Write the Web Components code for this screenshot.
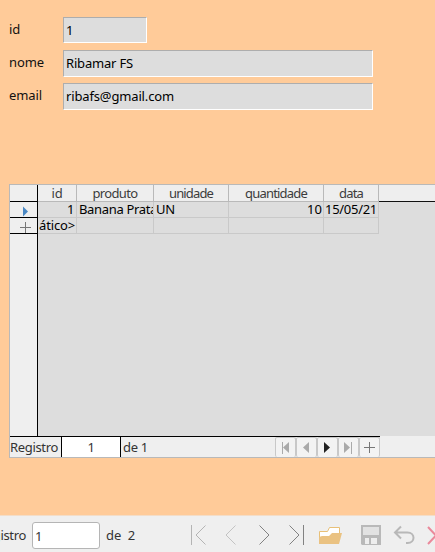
<!DOCTYPE html>
<html lang="pt"><head><meta charset="utf-8"><title>Cadastro</title>
<style>html,body{margin:0;height:100%;overflow:hidden}body{background:#ffcb99;font:13px/16px "Noto Sans","Open Sans",sans-serif;color:#111}</style></head>
<body><record-form></record-form>
<script>
const define=(name,css,html,ready)=>customElements.define(name,class extends HTMLElement{
  connectedCallback(){
    if(this.shadowRoot)return;
    const t=document.createElement('template');
    t.innerHTML='<style>*{box-sizing:border-box}'+css+'</style>'+html;
    this.attachShadow({mode:'open'}).append(t.content.cloneNode(true));
    if(ready)ready.call(this,this.shadowRoot);
  }
});

/* A text run whose tracking is adjusted to a given width. */
define('fit-text',':host{display:block;white-space:pre;flex:none}span{display:block;width:max-content}','<span><slot></slot></span>',function(root){
  const w=+this.getAttribute('w');
  const s=root.querySelector('span'), n=this.textContent.length;
  if(w){this.style.width=w+'px';s.style.letterSpacing=((w-s.getBoundingClientRect().width)/n)+'px';}
});

define('form-field',
 ':host{display:flex;height:var(--h,27px);align-items:flex-start}.label{width:54px;padding-top:4px}.box{width:var(--w,310px);height:100%;background:#ddd;border:1px solid;border-color:#adadad #fff #fff #adadad;padding:4px 0 0 2px;color:#000}',
 '<div class="label"><slot name="label"></slot></div><div class="box"><slot></slot></div>');

define('head-cell',
 ':host{display:flex;justify-content:center;background:#eee;border-right:1px solid #b9b9b9;border-bottom:1px solid #b9b9b9;color:#3c3c3c;overflow:hidden}',
 '<slot></slot>');
define('data-cell',
 ':host{display:flex;box-sizing:border-box;line-height:14px;background:#ddd;border-right:1px solid #c9c9c9;border-bottom:1px solid #c9c9c9;overflow:hidden;min-width:0;padding-left:2px;color:#000}:host([end]){justify-content:flex-end;padding:0 1px 0 0}',
 '<slot></slot>');
define('row-mark',
 ':host{display:block;background:#efefef;border-right:1px solid #000;border-bottom:1px solid #000}svg{display:block}',
 '<slot></slot>');
define('nav-button',
 ':host{display:block;box-sizing:border-box;width:21px;height:20px;background:#f3f3f3;border:1px solid #c8c8c8;border-bottom:0;border-radius:2px}svg{display:block}',
 '<svg width="19" height="19"></svg>',function(root){
  const s={first:'<path d="M6.5 4v12" stroke="#aaa"/><path d="M13 4v11L7 9.5z" fill="#aaa"/>',
   prev:'<path d="M12 4v11L6 9.5z" fill="#aaa"/>',
   next:'<path d="M6 4v11l6-5.500z" fill="#222"/>',
   last:'<path d="M5 4v11l6-5.500z" fill="#aaa"/><path d="M12.500 4v12" stroke="#aaa"/>',
   add:'<path d="M4 9.500h11M9.500 4v11" stroke="#777"/>'};
  root.querySelector('svg').innerHTML=s[this.getAttribute('kind')];
 });

define('data-grid',
 `:host{display:block;box-sizing:border-box;height:274px;border:1px solid #b9b9b9;border-right:0;background:#ddd}
 .grid{display:grid;grid-template-columns:28px 39px 77px 75px 95px 55px 1fr;grid-template-rows:17px 16px 16px 202px}
 .rest{background:#eee;border-bottom:1px solid #111}
 .side{background:#efefef;border-right:1px solid #000}
 .bar{display:flex;height:21px;background:#efefef;color:#333}
 .left{display:flex;width:370px;border-top:1px solid #000;height:21px}
 .num{width:60px;height:20px;background:#fff;border:solid #000;border-width:0 1px;display:flex;justify-content:center;margin:0 2px 0 3px;padding-top:2px}
 .left>fit-text{margin-top:2px}.nav{display:flex;margin-left:auto}`,
 `<div class="grid">
 <row-mark></row-mark><head-cell><fit-text w="11">id</fit-text></head-cell><head-cell><fit-text w="45">produto</fit-text></head-cell><head-cell><fit-text w="44">unidade</fit-text></head-cell><head-cell><fit-text w="62">quantidade</fit-text></head-cell><head-cell><fit-text w="24">data</fit-text></head-cell><div class="rest"></div>
 <row-mark><svg width="27" height="15"><path d="M13 4.500v10l5-5z" fill="#4a88c4"/></svg></row-mark><data-cell end><fit-text w="8">1</fit-text></data-cell><data-cell><fit-text w="78">Banana Prata</fit-text></data-cell><data-cell><fit-text w="19">UN</fit-text></data-cell><data-cell end><fit-text w="15">10</fit-text></data-cell><data-cell style="padding-left:1px"><fit-text w="52">15/05/21</fit-text></data-cell><i></i>
 <row-mark><svg width="27" height="15"><path d="M10 9.500h11M15.500 4v11" stroke="#777"/></svg></row-mark><data-cell end><fit-text w="36">ático&gt;</fit-text></data-cell><data-cell></data-cell><data-cell></data-cell><data-cell></data-cell><data-cell></data-cell><i></i>
 <div class="side"></div></div>
 <div class="bar"><div class="left"><fit-text w="48">Registro</fit-text><div class="num"><fit-text w="7">1</fit-text></div><fit-text w="25">de 1</fit-text>
 <div class="nav"><nav-button kind="first"></nav-button><nav-button kind="prev"></nav-button><nav-button kind="next"></nav-button><nav-button kind="last"></nav-button><nav-button kind="add"></nav-button></div></div></div>`);

define('tool-icons',':host{display:block}svg{display:block}',
 `<svg width="255" height="36" fill="none"><g transform="translate(-180 -516)">
 <path d="M191.500 525v20M205.500 525.500l-9.500 9.500 9.500 9.500" stroke="#b4b4b4"/>
 <path d="M235.500 525.500L226 535l9.500 9.500" stroke="#c3c3c3"/>
 <path d="M259.500 525.500L269 535l-9.500 9.500" stroke="#828282"/>
 <path d="M289.500 525.500L299 535l-9.500 9.500M303.500 525v20" stroke="#828282"/>
 <path d="M319.500 543.500v-12h8l2-4h10v6" fill="#fff" stroke="#e8c078"/>
 <path d="M319 544v-7l3-1h7l3-3h10l-3 11z" fill="#eac282"/>
 <path d="M361 525h20v20h-19l-1-1z" fill="#b9b9b9"/><path d="M363 527h16v8h-16z" fill="#e2e2e2"/><path d="M365 538h12v6h-12z" fill="#eee"/><path d="M369 538h2v6h-2z" fill="#b9b9b9"/>
 <path d="M401 526.500l-6 6 6 6M395 532.500h12.500c8 0 8 10.500 0 10.500H406" stroke="#b8b8b8" stroke-width="2"/>
 <path d="M428 527l16 17M428 544l16-17" stroke="#ea899b" stroke-width="2"/>
 </g></svg>`);

define('record-bar',
 ':host{display:flex;box-sizing:border-box;height:37px;background:#efefef;border-top:1px solid #f3ddc8;color:#333;overflow:hidden}.input{width:68px;height:27px;margin:6px 6px 0;background:#fff;border:1px solid #b5b5b5;border-radius:3px;padding:5px 0 0 2px;flex:none}.txt{margin-top:11px}.clip{width:26px;display:flex;justify-content:flex-end;flex:none}.count{width:74px;flex:none}',
 '<div class="txt clip"><fit-text w="48">Registro</fit-text></div><div class="input"><fit-text w="7">1</fit-text></div><div class="txt count"><fit-text w="29">de  2</fit-text></div><tool-icons></tool-icons>');

define('record-form',
 ':host{display:flex;flex-direction:column;height:100%;box-sizing:border-box}.fields{display:grid;gap:6px;padding:17px 0 0 9px}data-grid{margin:74px 0 0 9px;flex:none}record-bar{margin-top:auto}',
 `<div class="fields"><form-field style="--w:84px;--h:26px;margin-bottom:1px"><fit-text slot="label" w="11">id</fit-text><fit-text w="7">1</fit-text></form-field>
 <form-field><fit-text slot="label" w="35">nome</fit-text><fit-text w="67">Ribamar FS</fit-text></form-field>
 <form-field><fit-text slot="label" w="33">email</fit-text><fit-text w="108">ribafs@gmail.com</fit-text></form-field></div>
 <data-grid></data-grid><record-bar></record-bar>`);
</script></body></html>
